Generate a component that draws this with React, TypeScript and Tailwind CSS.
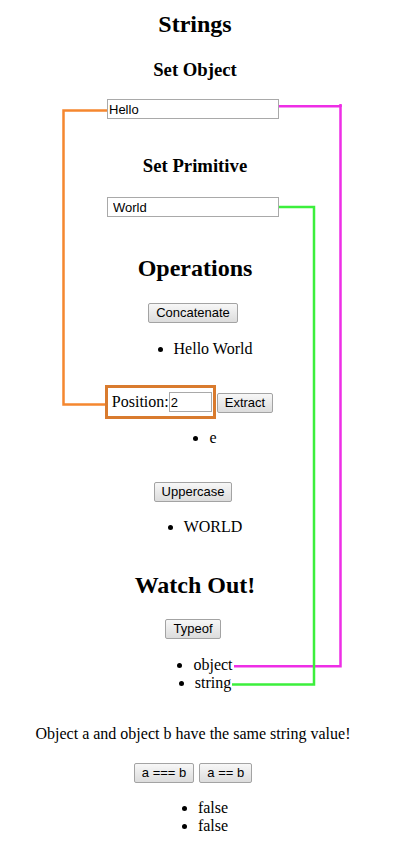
import React from "react";

const serif = { fontFamily: '"Liberation Serif", "Times New Roman", serif' };

function Btn({ children }: { children: React.ReactNode }) {
  return (
    <button className="box-border h-[20px] px-[7px] border border-[#a3a3a3] rounded-[2px] bg-linear-to-b from-[#f7f7f7] to-[#dcdcdc] text-[13px] leading-[18px] text-black font-['Liberation_Sans',Arial,sans-serif]">
      {children}
    </button>
  );
}

function Item({ children }: { children: React.ReactNode }) {
  return (
    <li className="flex justify-center pl-[40px] h-[18px] leading-[18px] text-[16px]">
      <span className="flex items-center">
        <span className="w-[5px] h-[5px] rounded-full bg-black mr-[11px]" />
        <span>{children}</span>
        <span className="w-[16px]" />
      </span>
    </li>
  );
}

function H2({ children, className = "" }: { children: React.ReactNode; className?: string }) {
  return (
    <h2 className={`text-center pl-[4px] text-[24px] leading-[28px] font-bold ${className}`}>{children}</h2>
  );
}

function H3({ children, className = "" }: { children: React.ReactNode; className?: string }) {
  return (
    <h3 className={`text-center pl-[4px] text-[18.72px] leading-[22px] font-bold ${className}`}>{children}</h3>
  );
}

export default function App() {
  return (
    <div className="relative w-[409px] h-[842px] bg-white text-black overflow-hidden" style={serif}>
      <div className="w-[386px] flex flex-col pt-[10px]">
        <H2>Strings</H2>
        <H3 className="mt-[21px]">Set Object</H3>
        <div className="flex justify-center mt-[18px]">
          <input
            readOnly
            value="Hello"
            className="box-border h-[20px] w-[172px] border border-[#a9a9a9] px-[1px] text-[13px] text-black bg-white outline-none font-['Liberation_Sans',Arial,sans-serif]"
          />
        </div>
        <H3 className="mt-[36px]">Set Primitive</H3>
        <div className="flex justify-center mt-[20px]">
          <input
            readOnly
            value="World"
            className="box-border h-[20px] w-[172px] border border-[#a9a9a9] pl-[5px] pr-[1px] text-[13px] text-black bg-white outline-none font-['Liberation_Sans',Arial,sans-serif]"
          />
        </div>
        <H2 className="mt-[37px]">Operations</H2>
        <div className="flex justify-center mt-[21px]">
          <Btn>Concatenate</Btn>
        </div>
        <ul className="mt-[17px]">
          <Item>Hello World</Item>
        </ul>
        <div className="flex justify-center items-center mt-[27px] pr-[8px]">
          <label className="box-border flex items-center h-[34px] border-[3px] border-[#d97b2e] pl-[4px] pr-[1px] text-[16px]">
            <span>Position:</span>
            <input
              readOnly
              value="2"
              className="box-border h-[20px] w-[43px] border border-[#a9a9a9] px-[1px] text-[13px] text-black bg-white outline-none font-['Liberation_Sans',Arial,sans-serif]"
            />
          </label>
          <span className="ml-[1px]">
            <Btn>Extract</Btn>
          </span>
        </div>
        <ul className="mt-[10px]">
          <Item>e</Item>
        </ul>
        <div className="flex justify-center mt-[35px]">
          <Btn>Uppercase</Btn>
        </div>
        <ul className="mt-[16px]">
          <Item>WORLD</Item>
        </ul>
        <H2 className="mt-[35px]">Watch Out!</H2>
        <div className="flex justify-center mt-[20px]">
          <Btn>Typeof</Btn>
        </div>
        <ul className="mt-[17px]">
          <Item>object</Item>
          <Item>string</Item>
        </ul>
        <p className="mt-[33px] text-center text-[16px] leading-[18px]">
          Object a and object b have the same string value!
        </p>
        <div className="flex justify-center gap-[5px] mt-[20px]">
          <Btn>a === b</Btn>
          <Btn>a == b</Btn>
        </div>
        <ul className="mt-[16px]">
          <Item>false</Item>
          <Item>false</Item>
        </ul>
      </div>

      <svg className="absolute top-0 left-0 pointer-events-none" width="409" height="842" viewBox="0 0 409 842">
        <polyline
          points="107,110.5 63.5,110.5 63.5,404.5 105,404.5"
          fill="none"
          stroke="#f5872f"
          strokeWidth="2.5"
        />
        <polyline
          points="279,106.3 340.5,106.3 340.5,666.3 234,666.3"
          fill="none"
          stroke="#ee2ee6"
          strokeWidth="2.5"
        />
        <line x1="340.5" y1="104" x2="340.5" y2="107" stroke="#ee2ee6" strokeWidth="2.5" />
        <polyline
          points="279,207 314,207 314,684.5 232,684.5"
          fill="none"
          stroke="#3cef3c"
          strokeWidth="2.5"
        />
      </svg>
    </div>
  );
}
